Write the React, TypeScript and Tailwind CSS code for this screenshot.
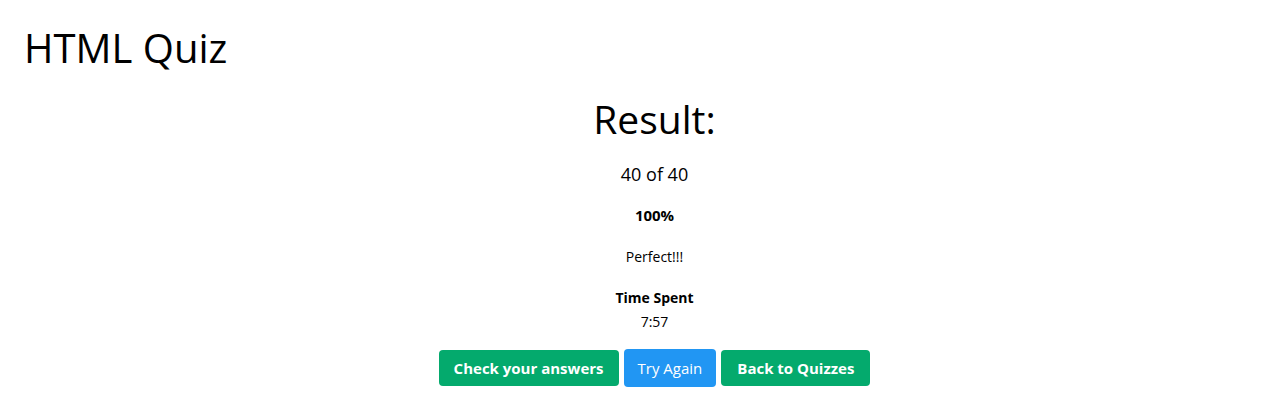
export default function App() {
  return (
    <div
      className="w-full min-h-screen bg-white text-black"
      style={{ fontFamily: '"Open Sans", "Noto Sans", sans-serif' }}
    >
      <h1 className="pl-[24px] pt-[22px] text-[40px] leading-[52px] font-normal">HTML Quiz</h1>
      <div className="flex flex-col items-center pl-[40px]">
        <h2 className="mt-[19px] text-[39px] leading-[52px] font-normal">Result:</h2>
        <p className="mt-[17px] text-[18px] leading-[24px]">40 of 40</p>
        <p className="mt-[18px] text-[15px] leading-[22px] font-bold">100%</p>
        <p className="mt-[20px] text-[14px] leading-[22px]">Perfect!!!</p>
        <p className="mt-[20px] text-[14px] leading-[20px] font-bold">Time Spent</p>
        <p className="mt-[4px] text-[14px] leading-[20px]">7:57</p>
        <div className="mt-[17px] flex items-center gap-[5px]">
          <button className="h-[36px] px-[15px] rounded-[4px] bg-[#04AA6D] text-white text-[15px] font-bold">
            Check your answers
          </button>
          <button className="h-[38px] px-[14px] rounded-[4px] bg-[#2196F3] text-white text-[15px]">
            Try Again
          </button>
          <button className="h-[36px] px-[16px] rounded-[4px] bg-[#04AA6D] text-white text-[15px] font-bold">
            Back to Quizzes
          </button>
        </div>
      </div>
    </div>
  );
}
